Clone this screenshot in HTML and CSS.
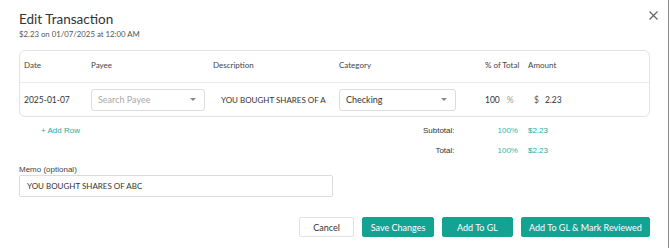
FILE: index.html
```html
<!DOCTYPE html>
<html lang="en">
<head>
    <meta charset="UTF-8">
    <meta name="viewport" content="width=device-width, initial-scale=1.0">
    <link rel="stylesheet" href="styles.css">
    <title>Edit Transaction</title>
</head>
<body>
    <div class="modal">
        <div class="modal-header">
            <div>
                <h1 class="title">Edit Transaction</h1>
                <div class="subtitle">$2.23 on 01/07/2025 at 12:00 AM</div>
            </div>
            <button class="close" aria-label="Close">
                <svg width="9" height="9" viewBox="0 0 9 9">
                    <path d="M0.5 0.5 L8.5 8.5 M8.5 0.5 L0.5 8.5" stroke="#666" stroke-width="1.2" fill="none"/>
                </svg>
            </button>
        </div>

        <div class="split-card">
            <div class="split-row split-head">
                <div>Date</div>
                <div>Payee</div>
                <div>Description</div>
                <div>Category</div>
                <div>% of Total</div>
                <div>Amount</div>
            </div>
            <div class="split-row split-body">
                <div class="date">2025-01-07</div>
                <div>
                    <div class="select payee">
                        <span class="placeholder">Search Payee</span>
                        <span class="caret"></span>
                    </div>
                </div>
                <div class="desc">YOU BOUGHT SHARES OF A</div>
                <div>
                    <div class="select category">
                        <span>Checking</span>
                        <span class="caret"></span>
                    </div>
                </div>
                <div class="pct"><span>100</span><span class="unit">%</span></div>
                <div class="amount"><span class="unit">$</span><span>2.23</span></div>
            </div>
        </div>

        <div class="totals">
            <a class="add-row" href="#">+ Add Row</a>
            <div class="sum-list">
                <div class="sum-line">
                    <span class="sum-label">Subtotal:</span>
                    <span class="sum-pct">100%</span>
                    <span class="sum-amt">$2.23</span>
                </div>
                <div class="sum-line">
                    <span class="sum-label">Total:</span>
                    <span class="sum-pct">100%</span>
                    <span class="sum-amt">$2.23</span>
                </div>
            </div>
        </div>

        <div class="memo">
            <label for="memo">Memo (optional)</label>
            <input id="memo" type="text" value="YOU BOUGHT SHARES OF ABC">
        </div>

        <div class="actions">
            <button class="btn btn-plain">Cancel</button>
            <button class="btn btn-teal save">Save Changes</button>
            <button class="btn btn-teal gl">Add To GL</button>
            <button class="btn btn-teal review">Add To GL &amp; Mark Reviewed</button>
        </div>
    </div>
</body>
</html>
```

FILE: styles.css
```css
body {
    margin: 0;
    background: #ffffff;
    font-family: Lato, "Open Sans", sans-serif;
    color: #333333;
}

.modal {
    width: 649px;
    height: 248px;
    padding: 0 0 0 19px;
    border-right: 1px solid #8a8a8a;
    box-sizing: content-box;
    background: #ffffff;
}

.modal-header {
    display: flex;
    justify-content: space-between;
    align-items: flex-start;
    width: 631px;
    padding-top: 9px;
}

.title {
    margin: 0;
    font-size: 13.5px;
    font-weight: 400;
    line-height: 20px;
    color: #333333;
}

.subtitle {
    font-size: 7.8px;
    line-height: 10px;
    color: #555555;
}

.close {
    border: none;
    background: none;
    padding: 0;
    margin: 2px -8px 0 0;
    width: 9px;
    height: 9px;
    cursor: pointer;
}

.close svg {
    display: block;
}

.split-card {
    margin-top: 11px;
    width: 629px;
    border: 1px solid #e3e3e3;
    border-radius: 6px;
}

.split-row {
    display: grid;
    grid-template-columns: 67px 122px 126px 146px 43px 1fr;
    align-items: center;
    padding-left: 4px;
    font-size: 8px;
}

.split-head {
    box-sizing: border-box;
    height: 32px;
    padding-bottom: 3px;
    border-bottom: 1px solid #ececec;
    color: #444444;
}

.split-body {
    height: 33px;
    font-size: 8.5px;
    color: #333333;
}

.select {
    box-sizing: border-box;
    height: 22px;
    border: 1px solid #dcdcdc;
    border-radius: 3px;
    display: flex;
    align-items: center;
    justify-content: space-between;
    padding: 0 8px 0 6px;
    font-size: 9px;
}

.payee {
    width: 114px;
}

.category {
    width: 117px;
    color: #333333;
}

.placeholder {
    color: #a8a8a8;
}

.caret {
    width: 0;
    height: 0;
    border-left: 3px solid transparent;
    border-right: 3px solid transparent;
    border-top: 3px solid #888888;
}

.desc {
    padding-left: 8px;
    font-size: 8px;
    white-space: nowrap;
    overflow: hidden;
}

.pct {
    display: flex;
    gap: 7px;
}

.amount {
    display: flex;
    gap: 6px;
    padding-left: 6px;
}

.unit {
    color: #999999;
}

.amount .unit {
    color: #555555;
}

.totals {
    display: flex;
    width: 631px;
    padding-top: 8px;
    font-family: "Liberation Sans", Arial, sans-serif;
    font-size: 8px;
}

.add-row {
    margin-left: 22px;
    color: #2aa79b;
    text-decoration: none;
    line-height: 12px;
}

.sum-list {
    display: flex;
    flex-direction: column;
    gap: 8px;
    margin-left: auto;
    margin-right: 102px;
}

.sum-line {
    display: flex;
    line-height: 12px;
}

.sum-label {
    width: 60px;
    text-align: right;
    color: #333333;
}

.sum-pct {
    margin-left: 43px;
    color: #3cb3a6;
}

.sum-amt {
    margin-left: 10px;
    color: #2aa79b;
}

.memo {
    margin-top: 7px;
    display: flex;
    flex-direction: column;
}

.memo label {
    font-family: "Liberation Sans", Arial, sans-serif;
    font-size: 8px;
    color: #444444;
    line-height: 11px;
}

.memo input {
    box-sizing: border-box;
    width: 314px;
    height: 22px;
    margin: 0;
    border: 1px solid #dcdcdc;
    border-radius: 2px;
    padding: 0 7px;
    font-family: Lato, sans-serif;
    font-size: 8px;
    color: #333333;
    outline: none;
}

.actions {
    display: flex;
    justify-content: flex-end;
    gap: 8px;
    width: 631px;
    margin-top: 20px;
}

.btn {
    box-sizing: border-box;
    height: 20px;
    border-radius: 2px;
    font-family: Lato, sans-serif;
    font-size: 9px;
    padding: 0;
    cursor: pointer;
}

.btn-plain {
    width: 55px;
    background: #ffffff;
    border: 1px solid #e2e2e2;
    color: #333333;
}

.btn-teal {
    background: #14a393;
    border: 1px solid #14a393;
    color: #ffffff;
}

.save {
    width: 72px;
}

.gl {
    width: 71px;
}

.review {
    width: 129px;
}
```
